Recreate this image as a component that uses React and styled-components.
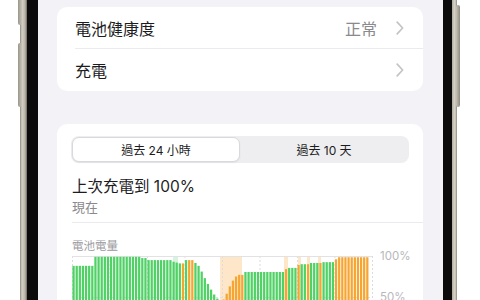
import React from 'react';
import styled, { createGlobalStyle } from 'styled-components';

const GlobalStyle = createGlobalStyle`
    body {
        margin: 0;
        background: #ffffff;
        font-family: "Inter", "Noto Sans CJK TC", sans-serif;
        color: #1c1c1e;
    }
`;

// each entry: [level %, colour] — 96 slots of 15 minutes
const G = 'g';
const O = 'o';
const run = (n, level, c) => Array.from({ length: n }, () => [level, c]);

const bars = [
    ...run(7, 88, G),
    ...run(15, 99, G),
    ...run(2, 97.5, G),
    ...run(8, 95, G),
    [93, G], [92, G], [91, G],
    [91, O], [95, G], [95, O], [95, O], [91.5, G],
    [88, G], [81, G], [73, G], [66, G], [59, G], [53, G], [48, G], [45, G],
    [47, O], [54, O], [63, O], [70, O], [75, O], [77, O], [77, O],
    ...run(13, 80.5, G),
    [84, O],
    ...run(3, 85.5, G),
    [89, O],
    ...run(2, 90, G),
    [90, O],
    ...run(3, 91.5, G),
    [91.5, O],
    ...run(4, 92.5, G),
    [96, O],
    ...run(10, 98.5, O),
];

const shades = [
    { x: 101, w: 5, c: '#d8f3dd' },
    { x: 148, w: 22, c: '#fde7c8' },
    { x: 212, w: 4, c: '#fde7c8' },
    { x: 226, w: 3, c: '#fde7c8' },
    { x: 235, w: 3, c: '#fde7c8' },
    { x: 246, w: 3, c: '#fde7c8' },
];

const CHART_W = 300;
const CHART_H = 82;
const PITCH = CHART_W / 96;

const Chevron = () => (
    <ChevronSvg width="8" height="14" viewBox="0 0 8 14">
        <polyline points="1.2,1.2 6.6,7 1.2,12.8" fill="none" stroke="#c4c4c8" strokeWidth="1.7" strokeLinecap="round" strokeLinejoin="round" />
    </ChevronSvg>
);

const BatteryChart = () => (
    <svg width={CHART_W + 1} height={CHART_H + 1} viewBox={`0 0 ${CHART_W + 1} ${CHART_H + 1}`}>
        {shades.map((s, i) => (
            <rect key={'s' + i} x={s.x} y={0} width={s.w} height={CHART_H} fill={s.c} />
        ))}
        {Array.from({ length: 9 }, (_, i) => (
            <line
                key={'v' + i}
                x1={i * 37.5 + 0.5}
                x2={i * 37.5 + 0.5}
                y1={0}
                y2={CHART_H}
                stroke="#dcdcdf"
                strokeWidth="1"
                strokeDasharray="2 2"
            />
        ))}
        <line x1={0} x2={CHART_W} y1={0.5} y2={0.5} stroke="#e2e2e5" strokeWidth="1" />
        <line x1={0} x2={CHART_W} y1={41.5} y2={41.5} stroke="#e2e2e5" strokeWidth="1" strokeDasharray="2 2" />
        {bars.map(([level, c], i) => {
            const top = (100 - level) * 0.82;
            return (
                <rect
                    key={i}
                    x={i * PITCH + 0.45}
                    y={top}
                    width={2.25}
                    height={CHART_H - top}
                    fill={c === G ? '#4fd165' : '#f6a531'}
                />
            );
        })}
    </svg>
);

const App = () => {
    return (
        <Page>
            <GlobalStyle />
            <Frame>
                <ButtonLeft $top={-4} $height={29} />
                <ButtonLeft $top={43} $height={64} />
                <ButtonRight />
                <Bezel>
                    <Screen>
                        <Card>
                            <Row>
                                <RowContent>
                                    <RowTitle>電池健康度</RowTitle>
                                    <RowValue>正常</RowValue>
                                    <Chevron />
                                </RowContent>
                            </Row>
                            <Row>
                                <RowContent $last>
                                    <RowTitle>充電</RowTitle>
                                    <Chevron />
                                </RowContent>
                            </Row>
                        </Card>

                        <UsageCard>
                            <Segmented>
                                <Segment $active>過去 24 小時</Segment>
                                <Segment>過去 10 天</Segment>
                            </Segmented>
                            <Headline>上次充電到 100%</Headline>
                            <Subline>現在</Subline>
                            <Divider />
                            <ChartLabel>電池電量</ChartLabel>
                            <ChartRow>
                                <BatteryChart />
                                <Axis>
                                    <AxisLabel>100%</AxisLabel>
                                    <AxisLabel>50%</AxisLabel>
                                </Axis>
                            </ChartRow>
                        </UsageCard>
                    </Screen>
                </Bezel>
            </Frame>
        </Page>
    );
};

const Page = styled.div`
    height: 300px;
    overflow: hidden;
    padding-left: 20px;
    display: flex;
    align-items: flex-start;
`;

const Frame = styled.div`
    position: relative;
    height: 300px;
    padding: 0 5px 0 7px;
    background: linear-gradient(
        to right,
        #8e897f 0,
        #d5d0c5 2px,
        #bcb6aa 5px,
        #6e6a62 7px,
        #6e6a62 calc(100% - 5px),
        #b3ada1 calc(100% - 5px),
        #dcd7cc calc(100% - 2px),
        #8e897f 100%
    );
`;

const ButtonLeft = styled.div`
    position: absolute;
    left: -2px;
    top: ${(p) => p.$top}px;
    width: 4px;
    height: ${(p) => p.$height}px;
    border-radius: 2px;
    background: linear-gradient(to right, #9a958b, #c9c4b9);
`;

const ButtonRight = styled.div`
    position: absolute;
    right: -3px;
    top: 5px;
    width: 4px;
    height: 102px;
    border-radius: 2px;
    background: linear-gradient(to right, #c9c4b9, #8f8a80);
`;

const Bezel = styled.div`
    height: 100%;
    background: #0b0b0c;
    padding: 0 9px 0 11px;
`;

const Screen = styled.div`
    width: 405px;
    height: 100%;
    box-sizing: border-box;
    background: #f2f2f7;
    padding: 7px 20px 0 19px;
    display: flex;
    flex-direction: column;
    gap: 33px;
`;

const Card = styled.div`
    background: #ffffff;
    border-radius: 10px;
`;

const Row = styled.div`
    height: 42px;
    padding-left: 18px;
    display: flex;
`;

const RowContent = styled.div`
    flex: 1;
    display: flex;
    align-items: center;
    padding-right: 19px;
    border-bottom: ${(p) => (p.$last ? 'none' : '1px solid #ebebef')};
`;

const RowTitle = styled.span`
    font-size: 16px;
    color: #1c1c1e;
    margin-right: auto;
`;

const RowValue = styled.span`
    font-size: 16px;
    color: #8a8a8e;
    margin-right: 19px;
`;

const ChevronSvg = styled.svg`
    display: block;
`;

const UsageCard = styled.div`
    flex: 1;
    background: #ffffff;
    border-radius: 10px 10px 0 0;
    padding: 12px 0 0 14px;
    display: flex;
    flex-direction: column;
`;

const Segmented = styled.div`
    display: grid;
    grid-template-columns: 1fr 1fr;
    height: 27px;
    margin-right: 14px;
    padding: 1px;
    box-sizing: border-box;
    background: #eeeef0;
    border-radius: 8px;
`;

const Segment = styled.div`
    display: flex;
    align-items: center;
    justify-content: center;
    font-size: 12px;
    color: #1c1c1e;
    border-radius: 7px;
    background: ${(p) => (p.$active ? '#ffffff' : 'transparent')};
    border: ${(p) => (p.$active ? '1px solid #d9d9dc' : '1px solid transparent')};
    box-shadow: ${(p) => (p.$active ? '0 1px 2px rgba(0, 0, 0, 0.06)' : 'none')};
`;

const Headline = styled.div`
    margin-top: 14px;
    padding-left: 1px;
    font-size: 15.5px;
    line-height: 20px;
    color: #1c1c1e;
`;

const Subline = styled.div`
    margin-top: 2px;
    padding-left: 1px;
    font-size: 13px;
    line-height: 16px;
    color: #8a8a8e;
`;

const Divider = styled.div`
    margin-top: 7px;
    margin-left: 1px;
    height: 1px;
    background: #ebebef;
`;

const ChartLabel = styled.div`
    margin-top: 16px;
    padding-left: 1px;
    font-size: 11.5px;
    line-height: 14px;
    color: #9a9a9e;
`;

const ChartRow = styled.div`
    margin-top: 3px;
    padding-left: 1px;
    display: flex;
    align-items: flex-start;
    gap: 7px;
`;

const Axis = styled.div`
    margin-top: -7px;
    display: flex;
    flex-direction: column;
    gap: 27px;
`;

const AxisLabel = styled.span`
    font-size: 11.5px;
    line-height: 14px;
    color: #b8b8bc;
`;

export default App;
